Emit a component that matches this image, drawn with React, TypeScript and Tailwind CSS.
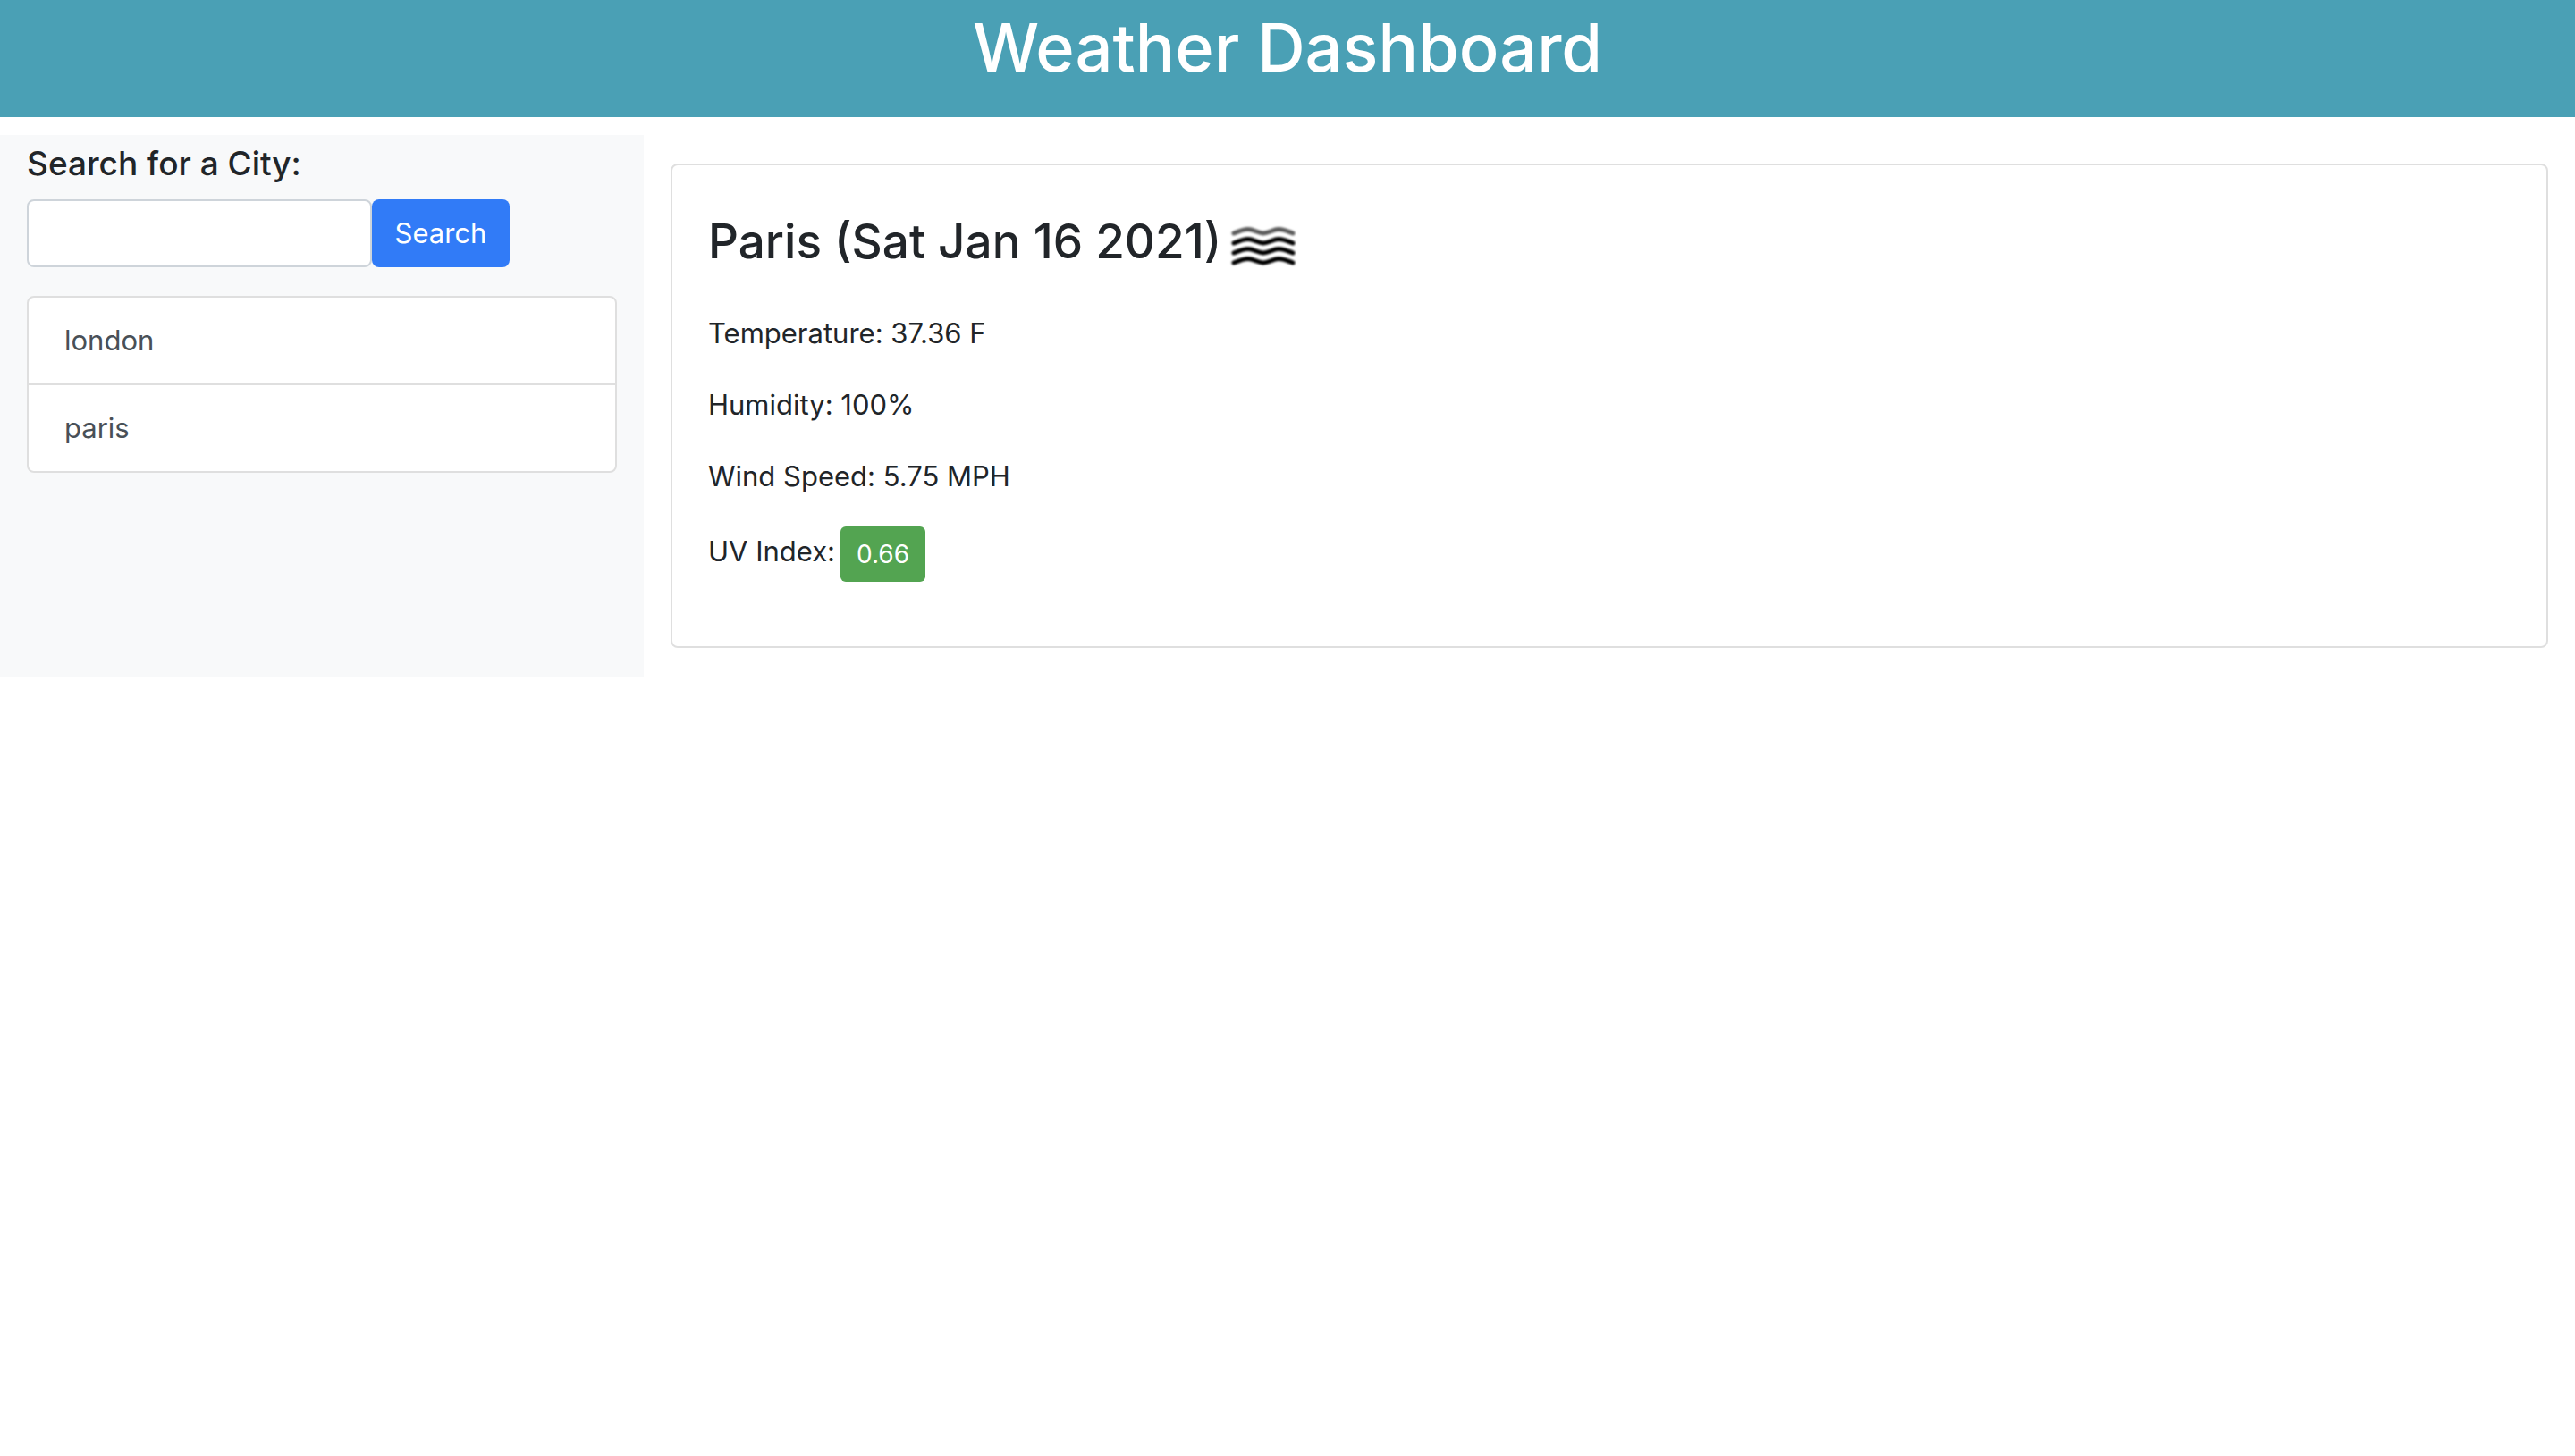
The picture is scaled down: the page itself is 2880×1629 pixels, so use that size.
import { useState } from "react";

const cities = ["london", "paris"];

const readings = ["Temperature: 37.36 F", "Humidity: 100%", "Wind Speed: 5.75 MPH"];

const waves = [
  { y: 10, color: "#5c5c5c" },
  { y: 21, color: "#000000" },
  { y: 32, color: "#000000" },
  { y: 43, color: "#000000" },
];

function MistIcon() {
  return (
    <svg
      viewBox="0 -10 74 58"
      className="h-[58px] w-[74px] shrink-0 blur-[1px]"
      fill="none"
      strokeWidth="5"
      strokeLinecap="round"
      strokeLinejoin="round"
      role="img"
      aria-label="Mist"
    >
      {waves.map(({ y, color }) => (
        <path
          key={y}
          stroke={color}
          transform={`translate(0 ${y})`}
          d="M4 0 C9 -2 14 -4.500 20 -4.500 C26 -4.500 31 0 37 0 C43 0 48 -4.500 54 -4.500 C60 -4.500 65 -2 70 0"
        />
      ))}
    </svg>
  );
}

function Sidebar() {
  const [query, setQuery] = useState("");
  return (
    <aside className="w-1/4 bg-[#f8f9fa] px-[30px] pt-2">
      <form onSubmit={(e) => e.preventDefault()}>
        <label htmlFor="city" className="mb-4 block text-[37px] leading-12 font-medium">
          Search for a City:
        </label>
        <div className="flex">
          <input
            id="city"
            type="text"
            value={query}
            onChange={(e) => setQuery(e.target.value)}
            className="h-[76px] w-[386px] min-w-0 rounded-lg border-2 border-[#ced4da] bg-white px-6"
          />
          <button type="submit" className="h-[76px] w-[154px] shrink-0 rounded-lg bg-[#317bf7] text-white">
            Search
          </button>
        </div>
      </form>
      <ul className="mt-8 divide-y-2 divide-[#dfdfdf] rounded-lg border-2 border-[#dfdfdf] bg-white">
        {cities.map((city) => (
          <li key={city}>
            <button type="button" className="w-full px-10 py-6 text-left text-[#495057]">
              {city}
            </button>
          </li>
        ))}
      </ul>
    </aside>
  );
}

function CurrentWeather() {
  return (
    <main className="flex-1 px-[30px] py-8">
      <section className="rounded-lg border-2 border-[#dfdfdf] bg-white px-10 pt-[49px] pb-[72px]">
        <h2 className="mb-[43px] flex items-center gap-2.5 text-[53px] leading-[72px] font-medium">
          Paris (Sat Jan 16 2021)
          <MistIcon />
        </h2>
        {readings.map((reading) => (
          <p key={reading} className="mb-8">
            {reading}
          </p>
        ))}
        <p className="flex items-start gap-1.5 leading-14">
          UV Index:
          <span className="rounded-md bg-[#53a451] px-[18px] py-2.5 text-[28px] leading-[42px] text-white">0.66</span>
        </p>
      </section>
    </main>
  );
}

export default function App() {
  return (
    <div className="min-h-screen bg-white font-['Inter',sans-serif] text-[31px] leading-12 text-[#212529]">
      <header className="mb-5 bg-[#4aa0b5] pt-[5px] pb-[30px] text-center text-white">
        <h1 className="text-[74px] leading-24 font-medium">Weather Dashboard</h1>
      </header>
      <div className="flex">
        <Sidebar />
        <CurrentWeather />
      </div>
    </div>
  );
}
